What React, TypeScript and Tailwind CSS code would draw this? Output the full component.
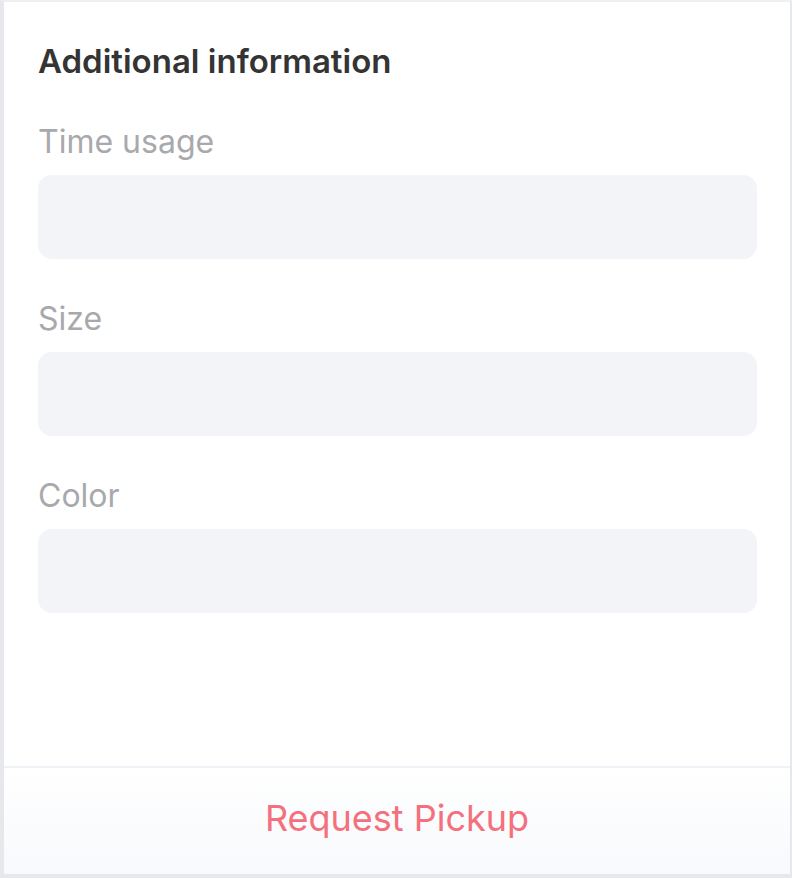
import React from "react";

const fields = ["Time usage", "Size", "Color"];

export default function App() {
  return (
    <div
      className="w-[792px] h-[878px] flex flex-col bg-white border-l-4 border-t-2 border-r-2 border-[#e6e8eb] border-t-[#eef0f4]"
      style={{ fontFamily: "Inter, 'Noto Sans', sans-serif" }}
    >
      {/* Form body */}
      <div className="flex-1 pt-[39px] px-[34px]">
        <h2 className="text-[33px] leading-[40px] font-semibold text-[#343434] mb-[41px]">
          Additional information
        </h2>
        <div className="flex flex-col gap-[40px]">
          {fields.map((f) => (
            <div key={f}>
              <div className="text-[32px] leading-[40px] text-[#a8a9ac] mb-[13px]">{f}</div>
              <div className="h-[84px] w-[719px] rounded-[14px] bg-[#f3f4f8]" />
            </div>
          ))}
        </div>
      </div>

      {/* Footer action */}
      <div className="h-[112px] border-t-2 border-[#eef1f5] border-b-4 border-b-[#e6e8eb] bg-gradient-to-b from-white to-[#f7f9fc] flex items-center justify-center">
        <button className="text-[36px] leading-[44px] text-[#f4707c] pb-[6px]">Request Pickup</button>
      </div>
    </div>
  );
}
